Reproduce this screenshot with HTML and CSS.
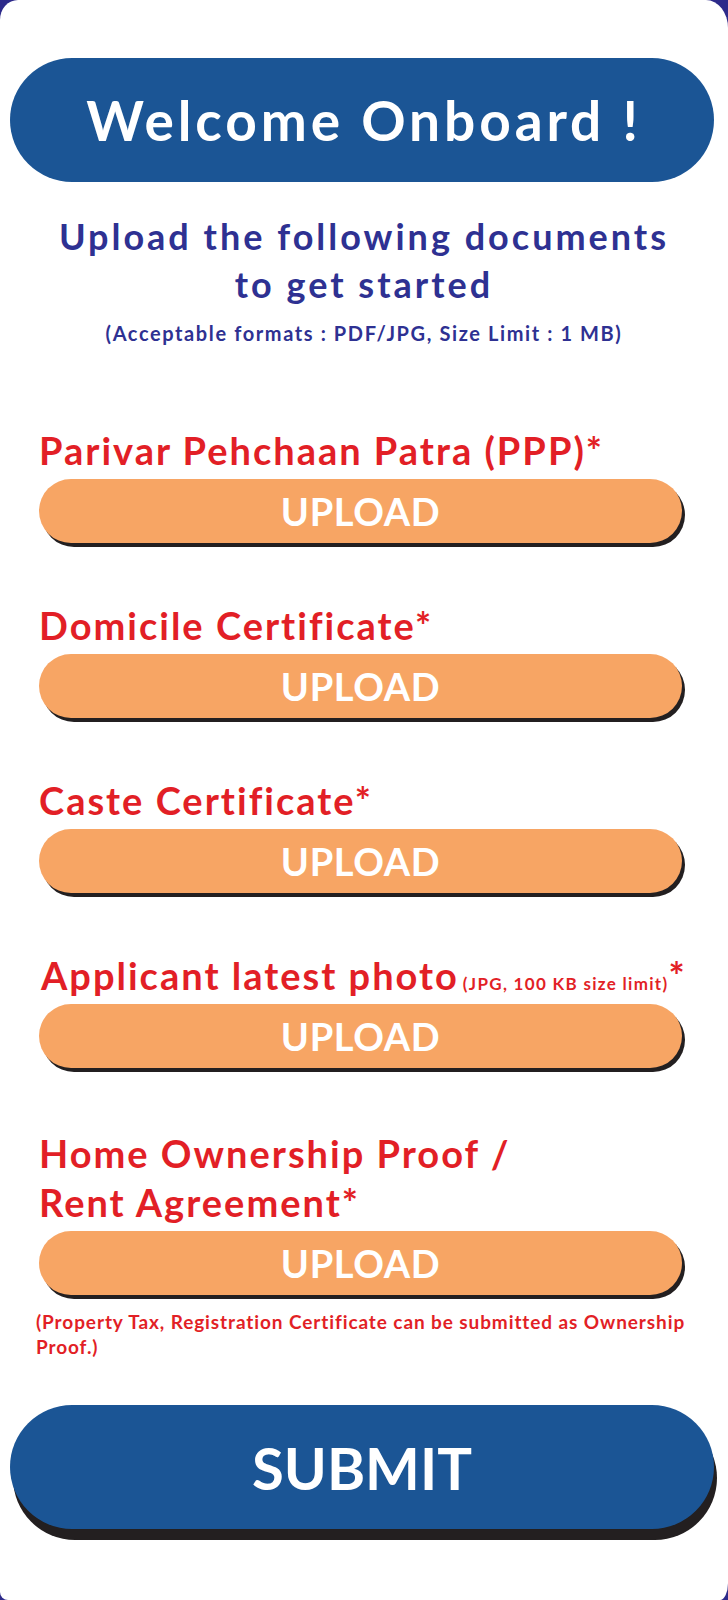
FILE: index.html
```html
<!DOCTYPE html>
<html lang="en">
<head>
<meta charset="utf-8">
<title>Welcome Onboard</title>
<link rel="stylesheet" href="styles.css">
</head>
<body>
<div class="screen">
  <div class="card">
    <h1 class="welcome">Welcome Onboard !</h1>
    <p class="intro">Upload the following documents<br>to get started</p>
    <p class="formats">(Acceptable formats : PDF/JPG, Size Limit : 1 MB)</p>

    <div class="docs">
      <div class="doc">
        <div class="doc-label">Parivar Pehchaan Patra (PPP)*</div>
        <button class="upload" type="button">UPLOAD</button>
      </div>
      <div class="doc">
        <div class="doc-label">Domicile Certificate*</div>
        <button class="upload" type="button">UPLOAD</button>
      </div>
      <div class="doc">
        <div class="doc-label">Caste Certificate*</div>
        <button class="upload" type="button">UPLOAD</button>
      </div>
      <div class="doc">
        <div class="doc-label doc-label-photo">Applicant latest photo<span class="hint">(JPG, 100 KB size limit)</span>*</div>
        <button class="upload" type="button">UPLOAD</button>
      </div>
      <div class="doc doc-last">
        <div class="doc-label">Home Ownership Proof /<br>Rent Agreement*</div>
        <button class="upload" type="button">UPLOAD</button>
        <p class="note">(Property Tax, Registration Certificate can be submitted as Ownership Proof.)</p>
      </div>
    </div>

    <button class="submit" type="button">SUBMIT</button>
  </div>
</div>
</body>
</html>
```

FILE: styles.css
```css
html, body {
  margin: 0;
  padding: 0;
}

body {
  background: #2d2a8a;
  font-family: "Lato", "Open Sans", sans-serif;
}

.screen {
  width: 728px;
  height: 1600px;
  overflow: hidden;
}

.card {
  box-sizing: border-box;
  width: 728px;
  height: 1600px;
  background: #ffffff;
  border-radius: 18px 22px 8px 8px / 20px 28px 17px 8px;
  padding-top: 58px;
  display: flex;
  flex-direction: column;
}

.welcome {
  margin: 0 14px 0 10px;
  height: 124px;
  border-radius: 62px;
  background: #1b5595;
  color: #ffffff;
  display: flex;
  align-items: center;
  justify-content: center;
  font-size: 55px;
  font-weight: 700;
  letter-spacing: 3.9px;
  padding-left: 4px;
}

.intro {
  margin: 30px 0 0;
  text-align: center;
  color: #2e3192;
  font-size: 36px;
  line-height: 48px;
  font-weight: 700;
  letter-spacing: 3px;
}

.formats {
  margin: 13px 0 0;
  text-align: center;
  color: #2e3192;
  font-size: 20px;
  line-height: 24px;
  font-weight: 700;
  letter-spacing: 1.6px;
}

.docs {
  margin-top: 81px;
  padding-left: 39px;
  display: flex;
  flex-direction: column;
}

.doc {
  display: flex;
  flex-direction: column;
  align-items: flex-start;
  margin-bottom: 58px;
}

.doc-last {
  margin-top: 3px;
  margin-bottom: 0;
}

.doc-label {
  color: #e21f26;
  font-size: 38px;
  line-height: 49px;
  font-weight: 700;
  letter-spacing: 2px;
  margin-bottom: 4px;
}

.doc-label-photo {
  padding-left: 2px;
}

.hint {
  font-size: 17px;
  line-height: 1;
  letter-spacing: 1.3px;
  margin-left: 4px;
}

.upload {
  width: 643px;
  height: 64px;
  border: 0;
  border-radius: 32px;
  background: #f7a564;
  box-shadow: 3px 4px 0 #231f20;
  color: #ffffff;
  font-family: "Lato", "Open Sans", sans-serif;
  font-size: 38px;
  font-weight: 700;
  letter-spacing: 0.6px;
  padding: 0;
}

.note {
  width: 660px;
  margin: 14px 0 0 -3px;
  color: #e21f26;
  font-size: 19px;
  line-height: 25px;
  font-weight: 700;
  letter-spacing: 0.9px;
}

.submit {
  margin: 46px 14px 0 10px;
  height: 124px;
  border: 0;
  border-radius: 62px;
  background: #1b5595;
  box-shadow: 3px 11px 0 #231f20;
  color: #ffffff;
  font-family: "Lato", "Open Sans", sans-serif;
  font-size: 58px;
  font-weight: 700;
  padding: 0;
}
```
